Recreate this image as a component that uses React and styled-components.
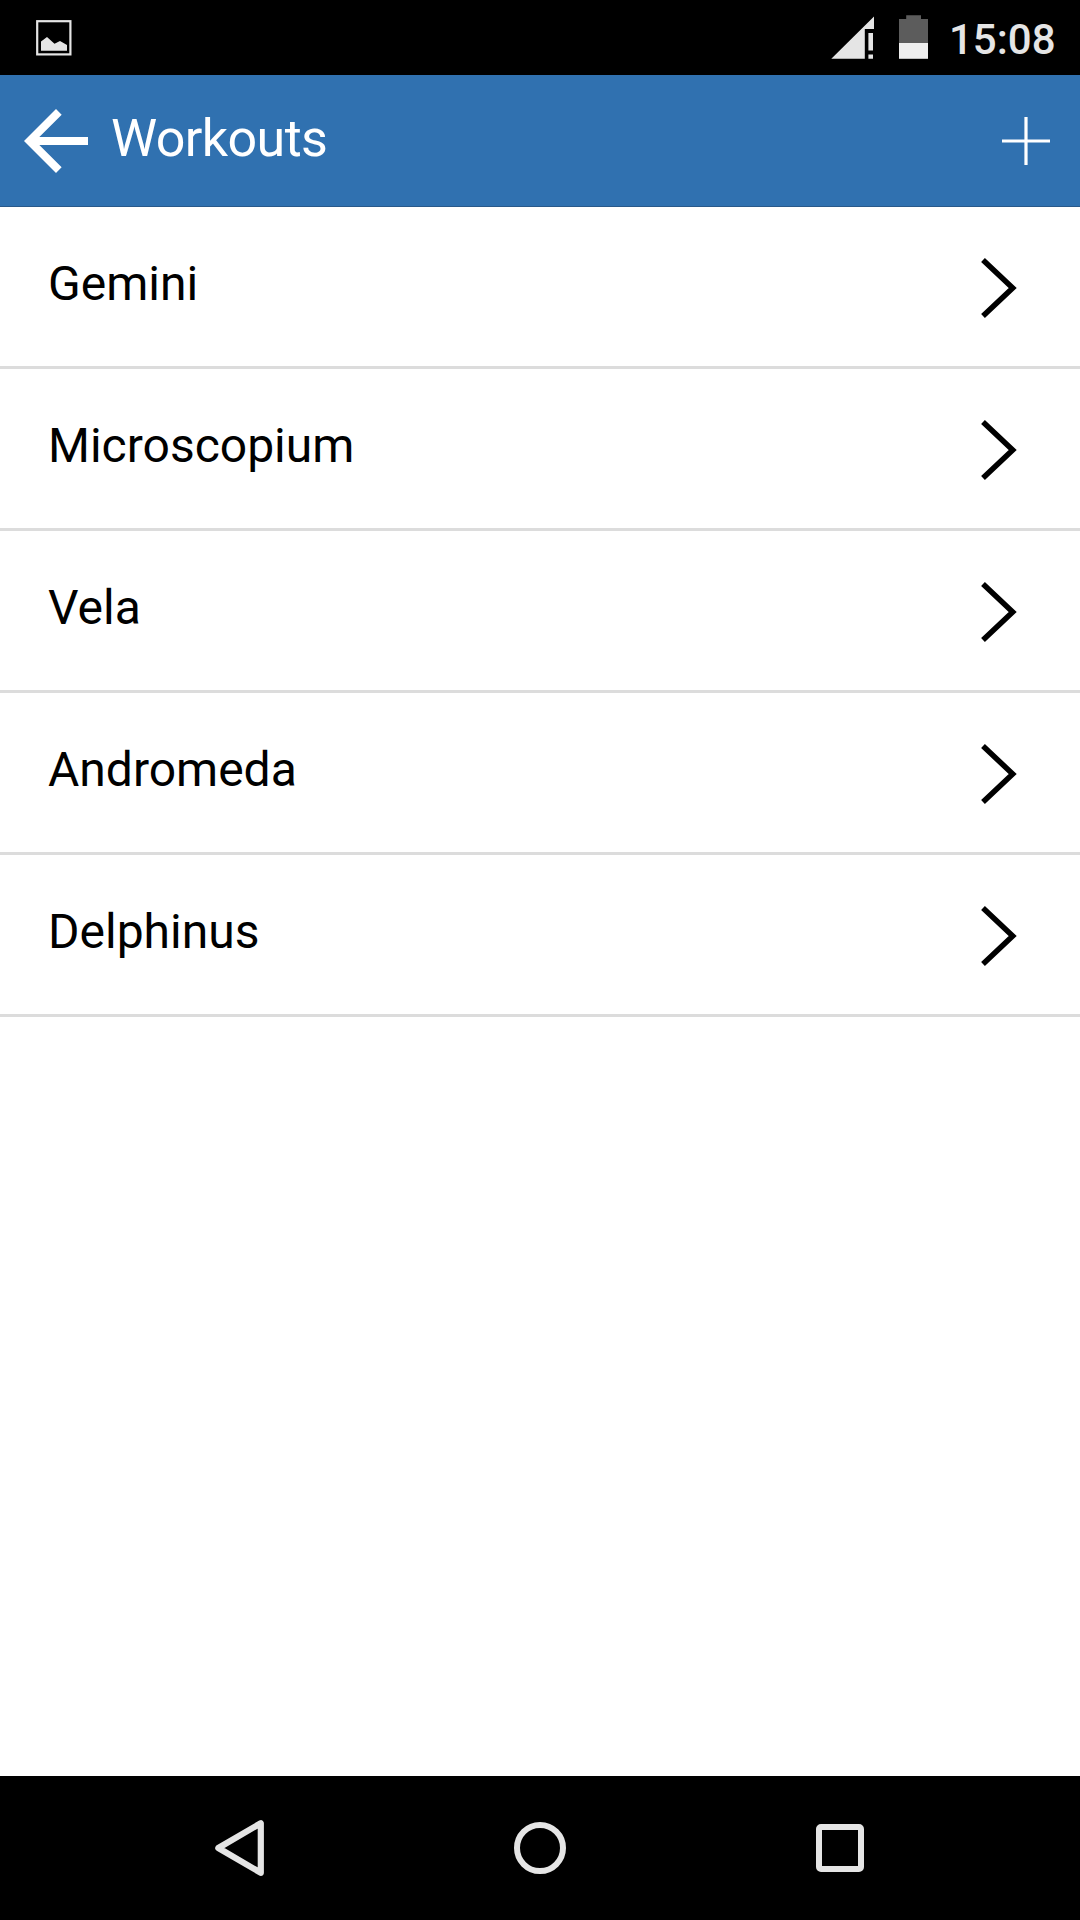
import React from "react";
import styled, { createGlobalStyle } from "styled-components";

const GlobalStyle = createGlobalStyle`
  *, *::before, *::after { box-sizing: border-box; }
  body { margin: 0; background: #fff; }
  button { border: 0; padding: 0; background: none; color: inherit; font: inherit; }
  svg { display: block; flex: none; }
`;

const Screen = styled.div`
  display: flex;
  flex-direction: column;
  width: 1080px;
  height: 1920px;
  overflow: hidden;
  background: #fff;
  color: #000;
  font-family: Roboto, "Noto Sans", sans-serif;
`;

const StatusBar = styled.div`
  display: flex;
  justify-content: space-between;
  align-items: flex-start;
  flex: none;
  height: 75px;
  padding: 0 24px 0 36px;
  background: #000;
  color: #e5e5e5;
`;

const StatusGroup = styled.div`
  display: flex;
`;

const BatteryIcon = styled.svg`
  margin-left: 25px;
`;

const Clock = styled.span`
  width: 107px;
  margin-left: 21px;
  padding-top: 15px;
  font-size: 42px;
  font-weight: 500;
  line-height: 50px;
  white-space: nowrap;
`;

const Header = styled.header`
  display: flex;
  align-items: center;
  flex: none;
  height: 132px;
  padding: 0 30px 0 8.4px;
  background: #3071b0;
  border-bottom: 1px solid #29598a;
  color: #fff;
`;

const IconButton = styled.button`
  display: flex;
  flex: none;
`;

const Title = styled.h1`
  flex: 1;
  margin: 0;
  padding: 0 0 3px 6.6px;
  font-size: 52px;
  font-weight: 400;
  letter-spacing: -0.6px;
  line-height: 60px;
`;

const List = styled.ul`
  flex: 1;
  margin: 0;
  padding: 0;
  list-style: none;
`;

const Row = styled.li`
  display: flex;
  align-items: center;
  justify-content: space-between;
  height: 162px;
  padding: 0 60px 0 48px;
  border-bottom: 3px solid #dcdcdc;
`;

const RowLabel = styled.span`
  padding-bottom: 6px;
  font-size: 48px;
  line-height: 56px;
`;

const ChevronIcon = styled.svg`
  margin-top: 3px;
`;

const NavBar = styled.nav`
  display: flex;
  justify-content: center;
  align-items: center;
  gap: 204px;
  flex: none;
  height: 144px;
  background: #000;
  color: #e5e5e5;
`;

const workouts = ["Gemini", "Microscopium", "Vela", "Andromeda", "Delphinus"];

export default function App() {
  return (
    <Screen>
      <GlobalStyle />
      <StatusBar>
        <svg width="36" height="75" viewBox="36 0 36 75">
          <rect x="37.2" y="21.2" width="33.2" height="33.2" fill="none" stroke="#e5e5e5" strokeWidth="2.2" />
          <path d="M41 50.7V41.5L47 37L54.5 43.8L60 41L67 45V50.7Z" fill="#e5e5e5" />
        </svg>
        <StatusGroup>
          <svg width="43" height="75" viewBox="831 0 43 75">
            <path d="M831.3 58.8L874 16.4V29H864.8V58.8Z" fill="#e5e5e5" />
            <path d="M868.4 33H873V50.6H868.4ZM868.4 54.5H873V58.8H868.4Z" fill="#e5e5e5" />
          </svg>
          <BatteryIcon width="29" height="75" viewBox="899 0 29 75">
            <path d="M906.2 15.2H921V19H928V43H899V19H906.2Z" fill="#5c5c5c" />
            <path d="M899 43H928V58.8H899Z" fill="#eee" />
          </BatteryIcon>
          <Clock>15:08</Clock>
        </StatusGroup>
      </StatusBar>
      <Header>
        <IconButton aria-label="Back">
          <svg width="96" height="96" viewBox="0 0 24 24">
            <path fill="currentColor" d="M20 11H7.83l5.59-5.59L12 4l-8 8 8 8 1.41-1.41L7.83 13H20z" />
          </svg>
        </IconButton>
        <Title>Workouts</Title>
        <IconButton aria-label="Add workout">
          <svg width="48" height="48" viewBox="0 0 48 48">
            <path d="M24 0V48M0 24H48" stroke="currentColor" strokeWidth="3.2" />
          </svg>
        </IconButton>
      </Header>
      <List>
        {workouts.map((name) => (
          <Row key={name}>
            <RowLabel>{name}</RowLabel>
            <ChevronIcon width="40" height="64" viewBox="980 256 40 64">
              <path d="M983 260L1012.7 288L983 316" fill="none" stroke="#000" strokeWidth="5.5" />
            </ChevronIcon>
          </Row>
        ))}
      </List>
      <NavBar>
        <IconButton aria-label="Back">
          <svg width="96" height="96" viewBox="192 1800 96 96">
            <path d="M260.8 1823.2V1872.8L218.3 1848Z" fill="none" stroke="currentColor" strokeWidth="6.2" strokeLinejoin="round" />
          </svg>
        </IconButton>
        <IconButton aria-label="Home">
          <svg width="96" height="96" viewBox="0 0 96 96">
            <circle cx="48" cy="48" r="23" fill="none" stroke="currentColor" strokeWidth="6" />
          </svg>
        </IconButton>
        <IconButton aria-label="Recent apps">
          <svg width="96" height="96" viewBox="0 0 96 96">
            <path fill="currentColor" fillRule="evenodd" d="M29 24H67A5 5 0 0 1 72 29V67A5 5 0 0 1 67 72H29A5 5 0 0 1 24 67V29A5 5 0 0 1 29 24ZM30 30V66H66V30Z" />
          </svg>
        </IconButton>
      </NavBar>
    </Screen>
  );
}
